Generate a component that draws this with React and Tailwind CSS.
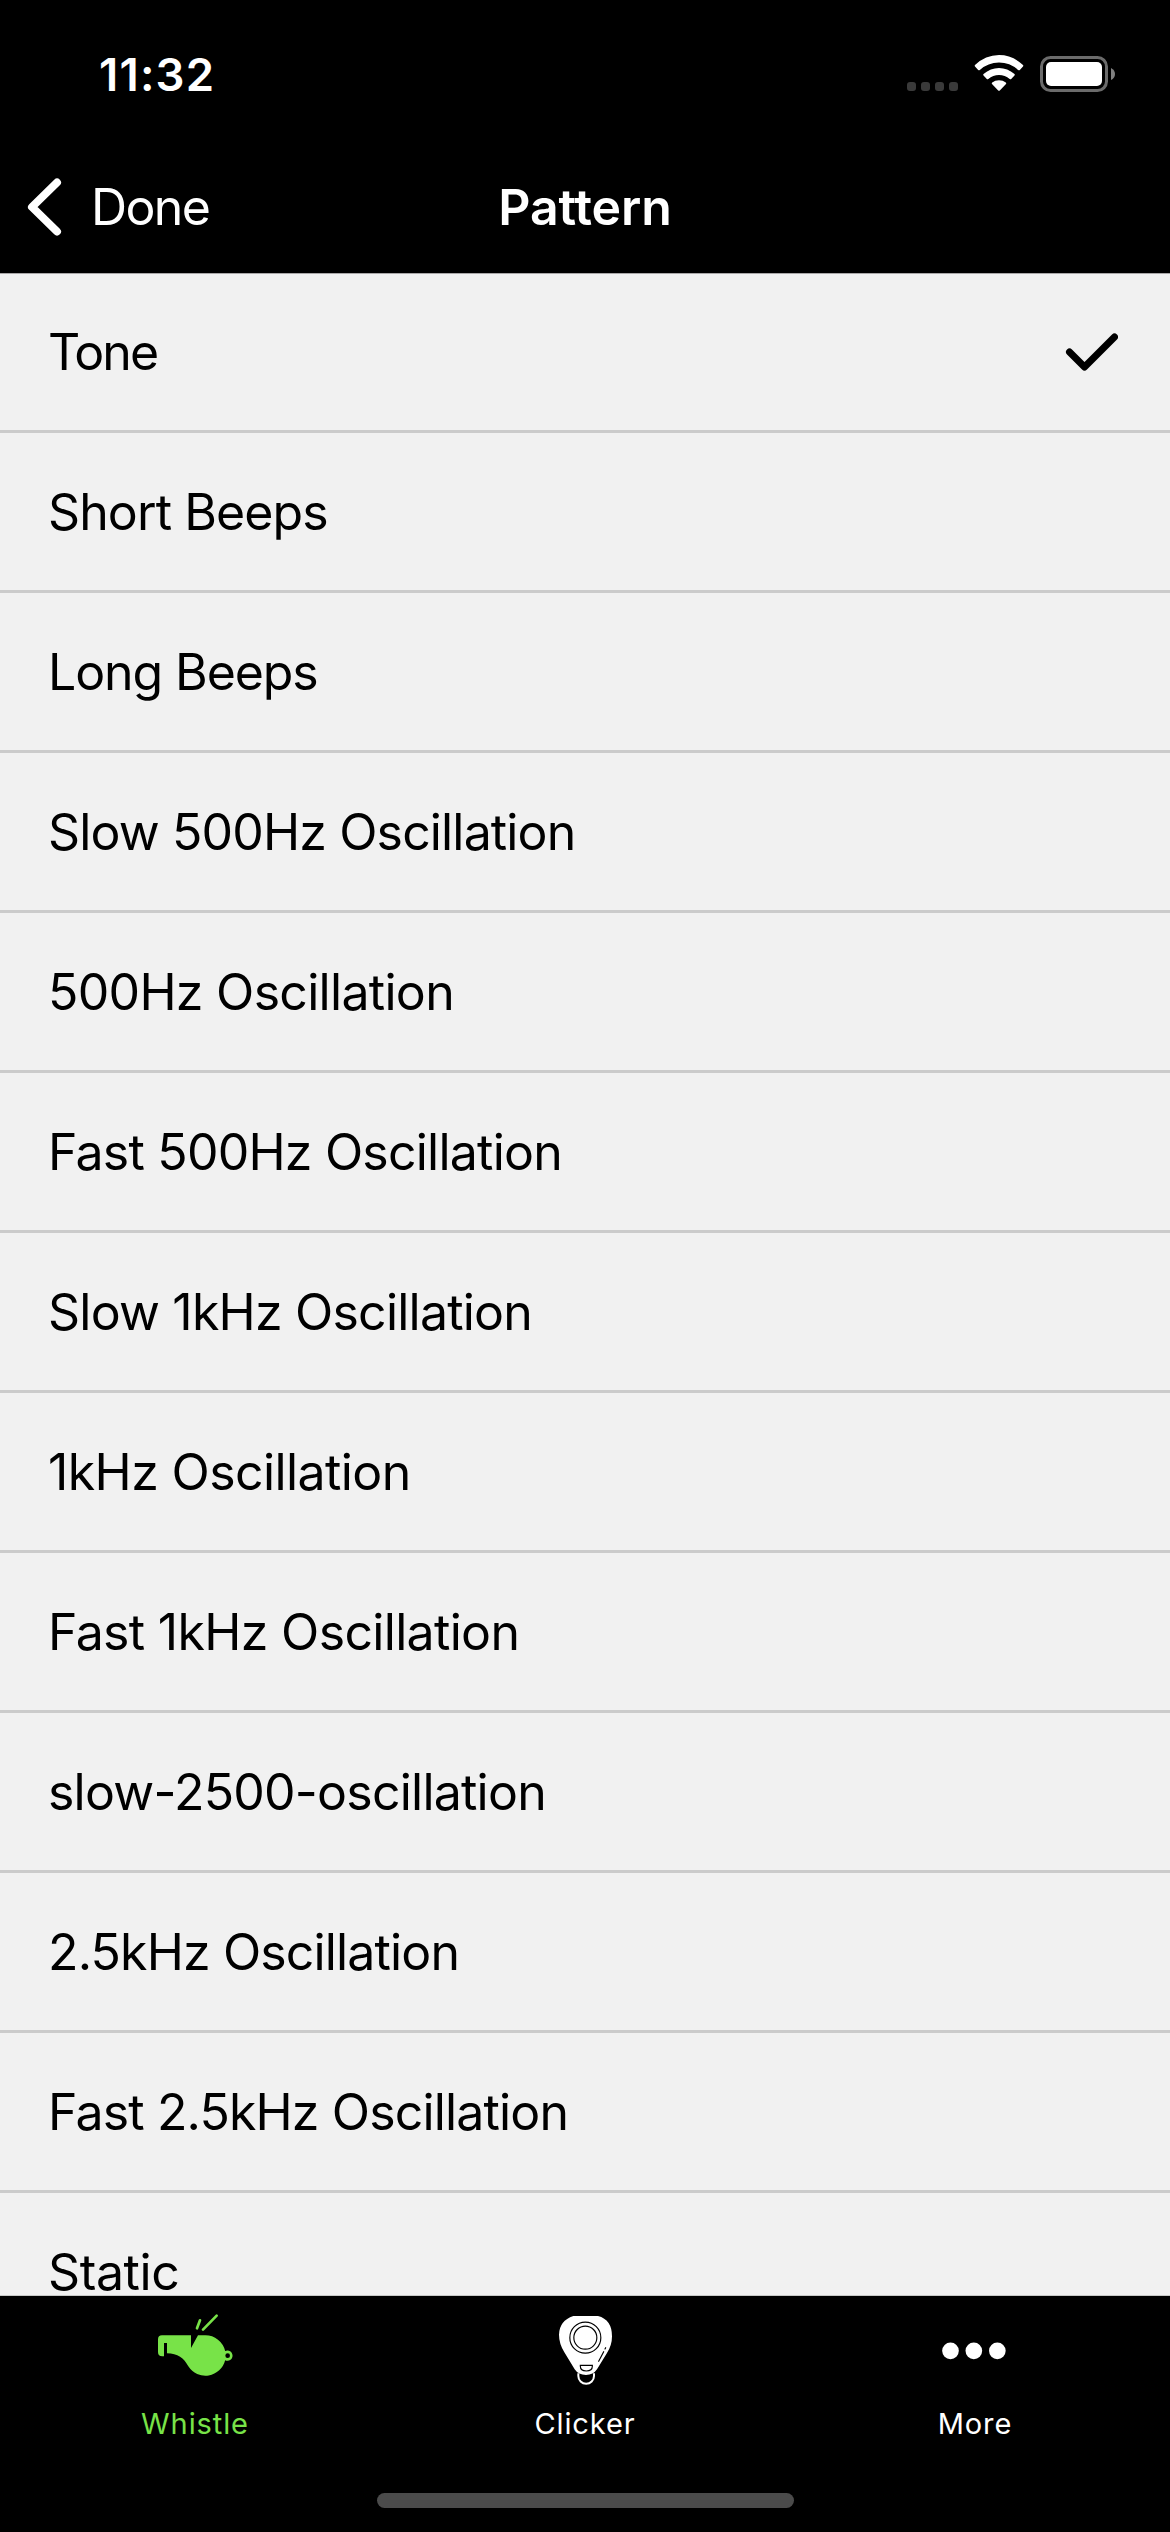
import React, { useState } from 'react';

const patterns = [
  { name: 'Tone', tracking: 'tracking-[-2px]' },
  { name: 'Short Beeps', tracking: 'tracking-[-0.9px]' },
  { name: 'Long Beeps', tracking: 'tracking-[-1.1px]' },
  { name: 'Slow 500Hz Oscillation', tracking: 'tracking-[-0.85px]' },
  { name: '500Hz Oscillation', tracking: 'tracking-[-0.7px]' },
  { name: 'Fast 500Hz Oscillation', tracking: 'tracking-[-0.78px]' },
  { name: 'Slow 1kHz Oscillation', tracking: 'tracking-[-0.78px]' },
  { name: '1kHz Oscillation', tracking: 'tracking-[-0.6px]' },
  { name: 'Fast 1kHz Oscillation', tracking: 'tracking-[-0.67px]' },
  { name: 'slow-2500-oscillation', tracking: 'tracking-[-0.77px]' },
  { name: '2.5kHz Oscillation', tracking: 'tracking-[-0.85px]' },
  { name: 'Fast 2.5kHz Oscillation', tracking: 'tracking-[-0.85px]' },
  { name: 'Static', tracking: 'tracking-[-0.4px]' },
];

const WhistleIcon = () => (
  <svg viewBox="75 66 240 228" className="w-20 h-[76px]" fill="none">
    <path
      d="M96 136H183V174L204 136H226A61 61 0 0 1 285.500 183A15.500 15.500 0 1 1 285.500 211A61 61 0 0 1 175 229C162 205 143 190 111 190V159H102V199H97Q84 199 84 186V148Q84 136 96 136Z"
      fill="currentColor"
    />
    <circle cx="293" cy="197" r="7" fill="#000" />
    <path d="M201 115L210 91M219 119L260 77" stroke="currentColor" strokeWidth="8" strokeLinecap="round" />
  </svg>
);

const ClickerIcon = () => (
  <svg viewBox="75 66 240 228" className="w-20 h-[76px]" fill="none">
    <path d="M175 250V258A23 23 0 0 0 222 258V250" stroke="currentColor" strokeWidth="6" />
    <path
      d="M160 78H234Q276 89 276 139Q276 166 261 189L231 238Q220 255 198 255Q175 255 164 238L133 187Q117 160 117 134Q118 92 160 78Z"
      fill="currentColor"
    />
    <g stroke="#000" strokeWidth="3.500">
      <circle cx="196" cy="143" r="46.500" />
      <circle cx="196" cy="143" r="34.500" />
      <path d="M181 226H217V229Q217 243 199 243Q181 243 181 229Z" />
      <path d="M236 214L251 185M255 177L257 173" strokeLinecap="round" />
    </g>
  </svg>
);

const MoreIcon = () => (
  <svg viewBox="75 66 240 228" className="w-20 h-[76px]" fill="currentColor">
    <circle cx="121.500" cy="182.500" r="25" />
    <circle cx="191.500" cy="182.500" r="25" />
    <circle cx="262" cy="182.500" r="25" />
  </svg>
);

const tabs = [
  { name: 'Whistle', Icon: WhistleIcon },
  { name: 'Clicker', Icon: ClickerIcon },
  { name: 'More', Icon: MoreIcon },
];

const StatusBar = () => (
  <div className="flex h-[140px] items-start justify-between pl-[99px] pr-[54px]">
    <span className="mt-[47px] text-[45.5px] leading-[56px] font-semibold tracking-[1.2px]">11:32</span>
    <svg viewBox="0 0 210 40" className="mt-[54px] h-10 w-[210px]" fill="none">
      <g fill="#3a3a3a">
        <rect x="1" y="28" width="9" height="9" rx="3" />
        <rect x="15" y="28" width="9" height="9" rx="3" />
        <rect x="29" y="28" width="9" height="9" rx="3" />
        <rect x="43" y="28" width="9" height="9" rx="3" />
      </g>
      <g fill="#fff">
        <path d="M69 12.500Q68.300 11.800 69 11Q79.500 1 93 1T117 11Q117.700 11.800 117 12.500L113.800 16Q113 16.700 112.200 16Q104 8.500 93 8.500T73.800 16Q73 16.700 72.200 16Z" />
        <path d="M77.500 21.500Q76.800 20.700 77.500 20Q84.500 14 93 14T108.500 20Q109.200 20.700 108.500 21.500L105.200 25Q104.500 25.600 103.700 25Q99 21 93 21T82.300 25Q81.500 25.600 80.800 25Z" />
        <path d="M86 30Q85.300 29.200 86.200 28.500Q89 26.300 93 26.300T99.800 28.500Q100.700 29.200 100 30L93.800 36.500Q93 37.200 92.200 36.500Z" />
      </g>
      <rect x="135.500" y="3.500" width="65" height="33" rx="9" stroke="#6b6b6b" strokeWidth="3" />
      <rect x="140" y="8" width="56" height="24" rx="5" fill="#fff" />
      <path d="M205 14Q209 16 209 20T205 26Z" fill="#808080" />
    </svg>
  </div>
);

const NavBar = () => (
  <div className="grid h-[133px] grid-cols-3 items-start">
    <button className="flex items-start pl-[26px] pt-[36px] text-left">
      <svg viewBox="0 0 38 62" className="h-[62px] w-[38px]" fill="none">
        <path d="M31 6.500L6 31L31 55.500" stroke="#fff" strokeWidth="8" strokeLinecap="round" strokeLinejoin="round" />
      </svg>
      <span className="mt-[1px] ml-[27px] text-[50px] leading-[60px] tracking-[-1.6px]">Done</span>
    </button>
    <h1 className="mt-[37px] text-center text-[50px] leading-[60px] font-semibold tracking-[-0.1px]">Pattern</h1>
  </div>
);

export default function App() {
  const [selected, setSelected] = useState('Tone');
  const [activeTab, setActiveTab] = useState('Whistle');

  return (
    <div className="flex h-[2532px] w-[1170px] flex-col overflow-hidden bg-black font-['Inter',sans-serif] text-white">
      <StatusBar />
      <NavBar />
      <ul className="min-h-0 flex-1 overflow-hidden border-t border-[#a9a7a8] bg-[#f1f1f1] text-black">
        {patterns.map(({ name, tracking }) => (
          <li
            key={name}
            onClick={() => setSelected(name)}
            className="flex h-40 items-center justify-between border-b-3 border-[#cbcbcb] pl-[48px] pr-[52px] first:h-[159px]"
          >
            <span className={`text-[50px] leading-[60px] whitespace-nowrap ${tracking}`}>{name}</span>
            {selected === name && (
              <svg viewBox="0 0 54 40" className="h-10 w-[54px]" fill="none">
                <path d="M5.500 20L20.500 35L50.500 5" stroke="#000" strokeWidth="7" strokeLinecap="round" strokeLinejoin="round" />
              </svg>
            )}
          </li>
        ))}
      </ul>
      <nav className="grid h-[237px] shrink-0 grid-cols-3 grid-rows-[190px_1fr] border-t border-[#c8cac8]">
        {tabs.map(({ name, Icon }) => (
          <button
            key={name}
            onClick={() => setActiveTab(name)}
            className={`flex flex-col items-center pt-[16px] ${activeTab === name ? 'text-[#78e348]' : 'text-white'}`}
          >
            <Icon />
            <span className="mt-[18px] text-[29px] leading-9 tracking-[0.9px]">{name}</span>
          </button>
        ))}
        <div className="col-span-3 flex justify-center pt-[7px]">
          <div className="h-[15px] w-[417px] rounded-full bg-[#4b4b4b]" />
        </div>
      </nav>
    </div>
  );
}
